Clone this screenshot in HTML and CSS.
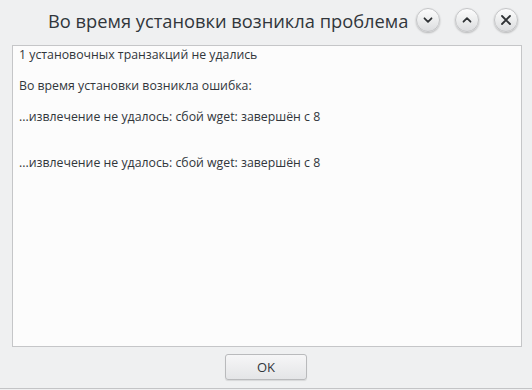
FILE: index.html
```html
<!DOCTYPE html>
<html>
  <head>
    <meta charset="UTF-8">
    <title>Во время установки возникла проблема</title>
    <link rel="stylesheet" href="styles.css">
  </head>
  <body>
    <div class="window">
      <div class="titlebar">
        <span class="title">Во время установки возникла проблема</span>
        <div class="controls">
          <button class="ctl" title="Свернуть">
            <svg width="12" height="12" viewBox="0 0 12 12"><path d="M2.5 4.3 L6 7.8 L9.5 4.3" /></svg>
          </button>
          <button class="ctl" title="Развернуть">
            <svg width="12" height="12" viewBox="0 0 12 12"><path d="M2.5 7.7 L6 4.2 L9.5 7.7" /></svg>
          </button>
          <button class="ctl" title="Закрыть">
            <svg width="12" height="12" viewBox="0 0 12 12"><path d="M2 2 L10 10 M10 2 L2 10" /></svg>
          </button>
        </div>
      </div>

      <div class="log">1 установочных транзакций не удались

Во время установки возникла ошибка:

...извлечение не удалось: сбой wget: завершён с 8


...извлечение не удалось: сбой wget: завершён с 8</div>

      <div class="actions">
        <button class="ok">OK</button>
      </div>
    </div>
  </body>
</html>
```

FILE: styles.css
```css
html, body {
  margin: 0;
  padding: 0;
}
body {
  width: 532px;
  height: 390px;
  background-color: #eff0f1;
  font-family: "Open Sans", "Noto Sans", sans-serif;
  color: #31363b;
  overflow: hidden;
}
.window {
  height: 388px;
  border-bottom: 1px solid #c3c4c6;
  display: flex;
  flex-direction: column;
}
.titlebar {
  height: 40px;
  display: flex;
  align-items: center;
  padding: 0 14px 0 48px;
}
.title {
  font-size: 18.3px;
  color: #31363b;
  white-space: nowrap;
}
.controls {
  margin-left: auto;
  display: flex;
  gap: 15px;
}
.ctl {
  width: 24px;
  height: 24px;
  padding: 0;
  border-radius: 50%;
  border: 1px solid #c4c5c7;
  background: linear-gradient(#fdfdfd, #dcdddf);
  box-shadow: 0 1px 2px rgba(0, 0, 0, 0.25);
  display: flex;
  align-items: center;
  justify-content: center;
}
.ctl svg path {
  fill: none;
  stroke: #2f3235;
  stroke-width: 1.8;
  stroke-linecap: round;
  stroke-linejoin: round;
}
.log {
  margin: 5px 10px 0 12px;
  height: 298px;
  border: 1px solid #c5c6c8;
  background-color: #fcfcfc;
  padding: 1px 6px;
  font-size: 12.3px;
  line-height: 15.4px;
  white-space: pre-line;
}
.actions {
  display: flex;
  justify-content: center;
  padding-top: 7px;
}
.ok {
  width: 82px;
  height: 26px;
  border: 1px solid #b9babc;
  border-radius: 3px;
  background: linear-gradient(#f6f6f7, #e4e5e7);
  box-shadow: 0 1px 1px rgba(0, 0, 0, 0.1);
  font-family: "Open Sans", "Noto Sans", sans-serif;
  font-size: 13px;
  color: #31363b;
}
```
